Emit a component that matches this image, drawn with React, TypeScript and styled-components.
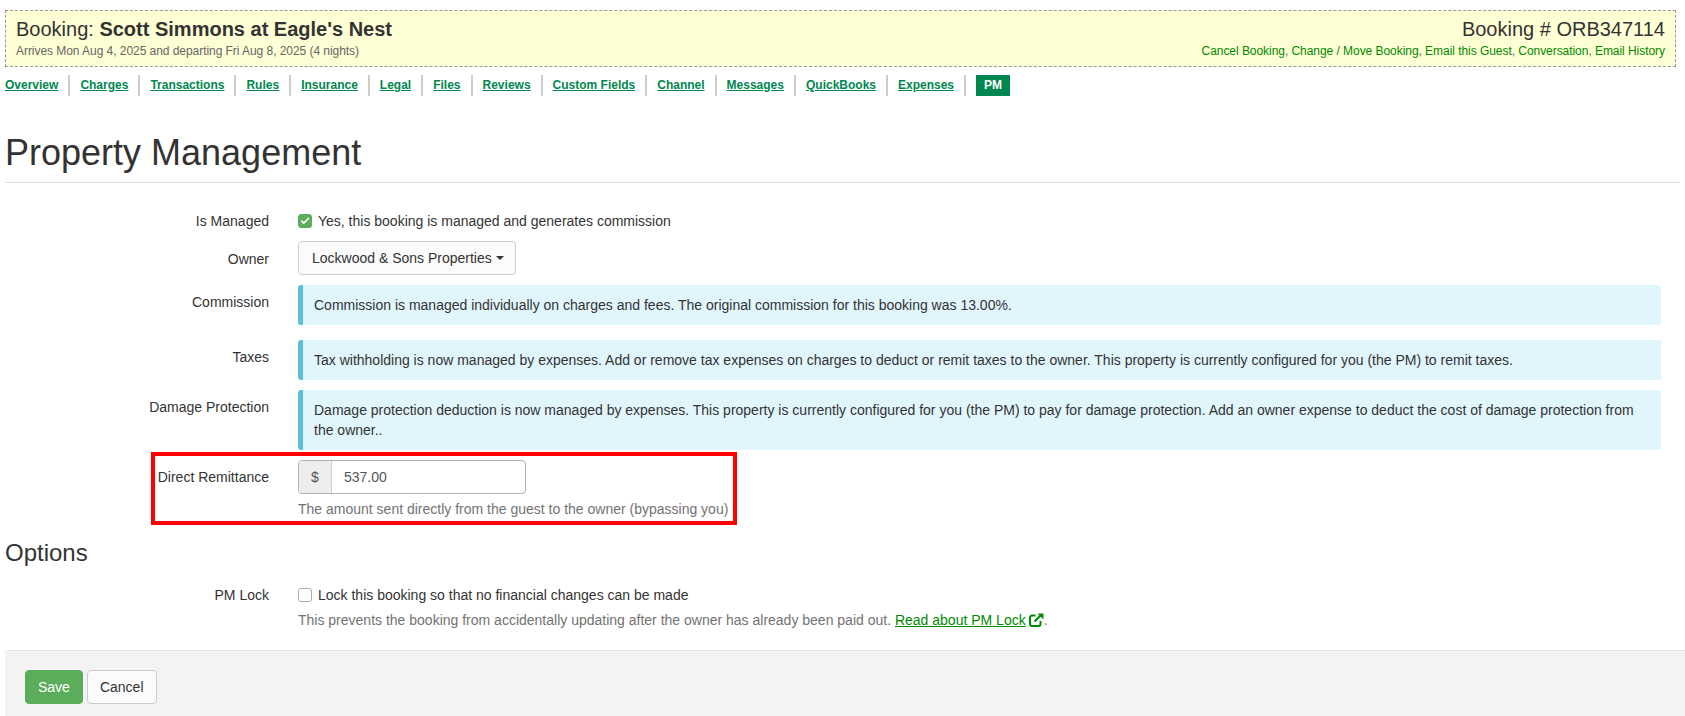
import styled, { createGlobalStyle } from 'styled-components';
import { Check } from 'lucide-react';

const GlobalStyle = createGlobalStyle`
  * { box-sizing: border-box; }
  body {
    margin: 0;
    background: #fff;
    color: #333;
    font-family: "Liberation Sans", Arial, sans-serif;
    font-size: 14px;
    line-height: 20px;
  }
`;

const Page = styled.div`
  height: 716px;
  overflow: hidden;
  padding-top: 10px;
`;

const Banner = styled.div`
  margin: 0 9px 0 5px;
  height: 57px;
  padding: 6px 10px 0;
  display: flex;
  justify-content: space-between;
  background: #ffffd5;
  border: 1px dashed #999;
`;

const BannerSide = styled.div<{ $right?: boolean }>`
  text-align: ${(p) => (p.$right ? 'right' : 'left')};
`;

const BannerTitle = styled.div`
  font-size: 20px;
  line-height: 24px;
`;

const BannerSub = styled.div`
  margin-top: 2px;
  font-size: 12px;
  line-height: 17px;
  letter-spacing: -0.05px;
  color: #666;
`;

const BannerLink = styled.span`
  color: #008a00;
`;

const Nav = styled.div`
  display: flex;
  align-items: center;
  padding: 8px 0 0 5px;
`;

const NavItem = styled.a`
  font-size: 12px;
  line-height: 21px;
  font-weight: bold;
  color: #00874f;
  text-decoration: underline;
  padding-right: 10px;
  margin-right: 10px;
  border-right: 2px solid #ccc;

  &:last-of-type {
    border-right: none;
    margin-right: 0;
    padding: 0 8px;
    background: #00874f;
    color: #fff;
    text-decoration: none;
  }
`;

const Heading = styled.h1`
  margin: 0 5px;
  padding: 37px 0 9px;
  font-size: 36px;
  line-height: 40px;
  font-weight: 400;
  border-bottom: 1px solid #ddd;
`;

const Form = styled.div`
  margin: 0 24px 0 5px;
  padding-top: 28px;
`;

const Row = styled.div<{ $gap?: number }>`
  position: relative;
  display: grid;
  grid-template-columns: 264px 1fr;
  column-gap: 29px;
  margin-bottom: ${(p) => p.$gap ?? 10}px;
`;

const Label = styled.div<{ $top?: number }>`
  text-align: right;
  padding-top: ${(p) => p.$top ?? 0}px;
`;

const CheckLine = styled.div`
  display: flex;
  align-items: center;
  gap: 6px;
`;

const CheckBox = styled.span<{ $checked?: boolean }>`
  width: 14px;
  height: 14px;
  display: flex;
  align-items: center;
  justify-content: center;
  border-radius: 3px;
  border: 1px solid ${(p) => (p.$checked ? '#5bad5b' : '#adadad')};
  background: ${(p) => (p.$checked ? '#5bad5b' : '#fff')};
  color: #fff;
`;

const DropButton = styled.button`
  display: inline-flex;
  align-items: center;
  height: 34px;
  padding: 0 11px 0 13px;
  font: inherit;
  color: #333;
  background: #fbfbfb;
  border: 1px solid #ccc;
  border-radius: 4px;
`;

const Caret = styled.span`
  margin-left: 4px;
  border-top: 4px solid #333;
  border-left: 4px solid transparent;
  border-right: 4px solid transparent;
`;

const Alert = styled.div`
  padding: 10px 15px 10px 11px;
  background: #e1f5fd;
  border-left: 5px solid #5bc0de;
  border-radius: 3px;
`;

const InputGroup = styled.div`
  display: flex;
  width: 228px;
  height: 34px;
  border: 1px solid #aab2bd;
  border-radius: 4px;
  overflow: hidden;
`;

const Addon = styled.span`
  width: 33px;
  display: flex;
  align-items: center;
  justify-content: center;
  background: #eee;
  border-right: 1px solid #ccc;
  color: #555;
`;

const Value = styled.span`
  padding: 6px 12px;
  color: #555;
`;

const Help = styled.div`
  margin-top: 5px;
  color: #737373;
`;

const RedBox = styled.div`
  position: absolute;
  left: 146px;
  top: -8px;
  width: 586px;
  height: 73px;
  border: 4px solid #f00;
  pointer-events: none;
`;

const SubHeading = styled.h3`
  margin: 0 0 19px;
  font-size: 24px;
  line-height: 27px;
  font-weight: 400;
`;

const ReadLink = styled.a`
  color: #008a00;
  text-decoration: underline;
`;

const LinkIcon = styled.svg`
  margin-left: 3px;
  vertical-align: -2px;
`;

const Footer = styled.div`
  margin: 20px 0 0 5px;
  padding: 19px 20px;
  height: 70px;
  display: flex;
  gap: 4px;
  background: #f3f3f3;
  border-top: 1px solid #e5e5e5;
  border-top-left-radius: 4px;
`;

const Button = styled.button<{ $primary?: boolean }>`
  height: 34px;
  padding: 0 12px;
  font: inherit;
  color: ${(p) => (p.$primary ? '#fff' : '#333')};
  background: ${(p) => (p.$primary ? '#5bad5b' : '#fbfbfb')};
  border: 1px solid ${(p) => (p.$primary ? '#5bad5b' : '#ccc')};
  border-radius: 4px;
`;

const tabs = [
  'Overview', 'Charges', 'Transactions', 'Rules', 'Insurance', 'Legal', 'Files', 'Reviews',
  'Custom Fields', 'Channel', 'Messages', 'QuickBooks', 'Expenses', 'PM',
];

export default function App() {
  return (
    <Page>
      <GlobalStyle />
      <Banner>
        <BannerSide>
          <BannerTitle>Booking: <b>Scott Simmons at Eagle's Nest</b></BannerTitle>
          <BannerSub>Arrives Mon Aug 4, 2025 and departing Fri Aug 8, 2025 (4 nights)</BannerSub>
        </BannerSide>
        <BannerSide $right>
          <BannerTitle>Booking # ORB347114</BannerTitle>
          <BannerSub>
            <BannerLink>Cancel Booking</BannerLink>, <BannerLink>Change / Move Booking</BannerLink>,{' '}
            <BannerLink>Email this Guest</BannerLink>, <BannerLink>Conversation</BannerLink>,{' '}
            <BannerLink>Email History</BannerLink>
          </BannerSub>
        </BannerSide>
      </Banner>
      <Nav>
        {tabs.map((t) => (
          <NavItem key={t}>{t}</NavItem>
        ))}
      </Nav>
      <Heading>Property Management</Heading>
      <Form>
        <Row $gap={10}>
          <Label>Is Managed</Label>
          <CheckLine>
            <CheckBox $checked><Check size={10} strokeWidth={4} /></CheckBox>
            Yes, this booking is managed and generates commission
          </CheckLine>
        </Row>
        <Row>
          <Label $top={8}>Owner</Label>
          <div><DropButton>Lockwood &amp; Sons Properties <Caret /></DropButton></div>
        </Row>
        <Row $gap={15}>
          <Label $top={7}>Commission</Label>
          <Alert>Commission is managed individually on charges and fees. The original commission for this booking was 13.00%.</Alert>
        </Row>
        <Row>
          <Label $top={7}>Taxes</Label>
          <Alert>Tax withholding is now managed by expenses. Add or remove tax expenses on charges to deduct or remit taxes to the owner. This property is currently configured for you (the PM) to remit taxes.</Alert>
        </Row>
        <Row $gap={10}>
          <Label $top={7}>Damage Protection</Label>
          <Alert>Damage protection deduction is now managed by expenses. This property is currently configured for you (the PM) to pay for damage protection. Add an owner expense to deduct the cost of damage protection from the owner..</Alert>
        </Row>
        <Row $gap={20}>
          <Label $top={7}>Direct Remittance</Label>
          <div>
            <InputGroup><Addon>$</Addon><Value>537.00</Value></InputGroup>
            <Help>The amount sent directly from the guest to the owner (bypassing you)</Help>
          </div>
          <RedBox />
        </Row>
        <SubHeading>Options</SubHeading>
        <Row $gap={0}>
          <Label>PM Lock</Label>
          <div>
            <CheckLine><CheckBox />Lock this booking so that no financial changes can be made</CheckLine>
            <Help>
              This prevents the booking from accidentally updating after the owner has already been paid out.{' '}
              <ReadLink>
                Read about PM Lock
                <LinkIcon width="15" height="14" viewBox="0 0 15 14" fill="none">
                  <path d="M6.5 2.5H3a2 2 0 0 0-2 2V11a2 2 0 0 0 2 2h6.5a2 2 0 0 0 2-2V8" stroke="#008a00" strokeWidth="2" />
                  <path d="M5.5 8.5L12 2" stroke="#008a00" strokeWidth="2.2" />
                  <path d="M8.5 0.5H14.5V6.5Z" fill="#008a00" />
                </LinkIcon>
              </ReadLink>.
            </Help>
          </div>
        </Row>
      </Form>
      <Footer>
        <Button $primary>Save</Button>
        <Button>Cancel</Button>
      </Footer>
    </Page>
  );
}
